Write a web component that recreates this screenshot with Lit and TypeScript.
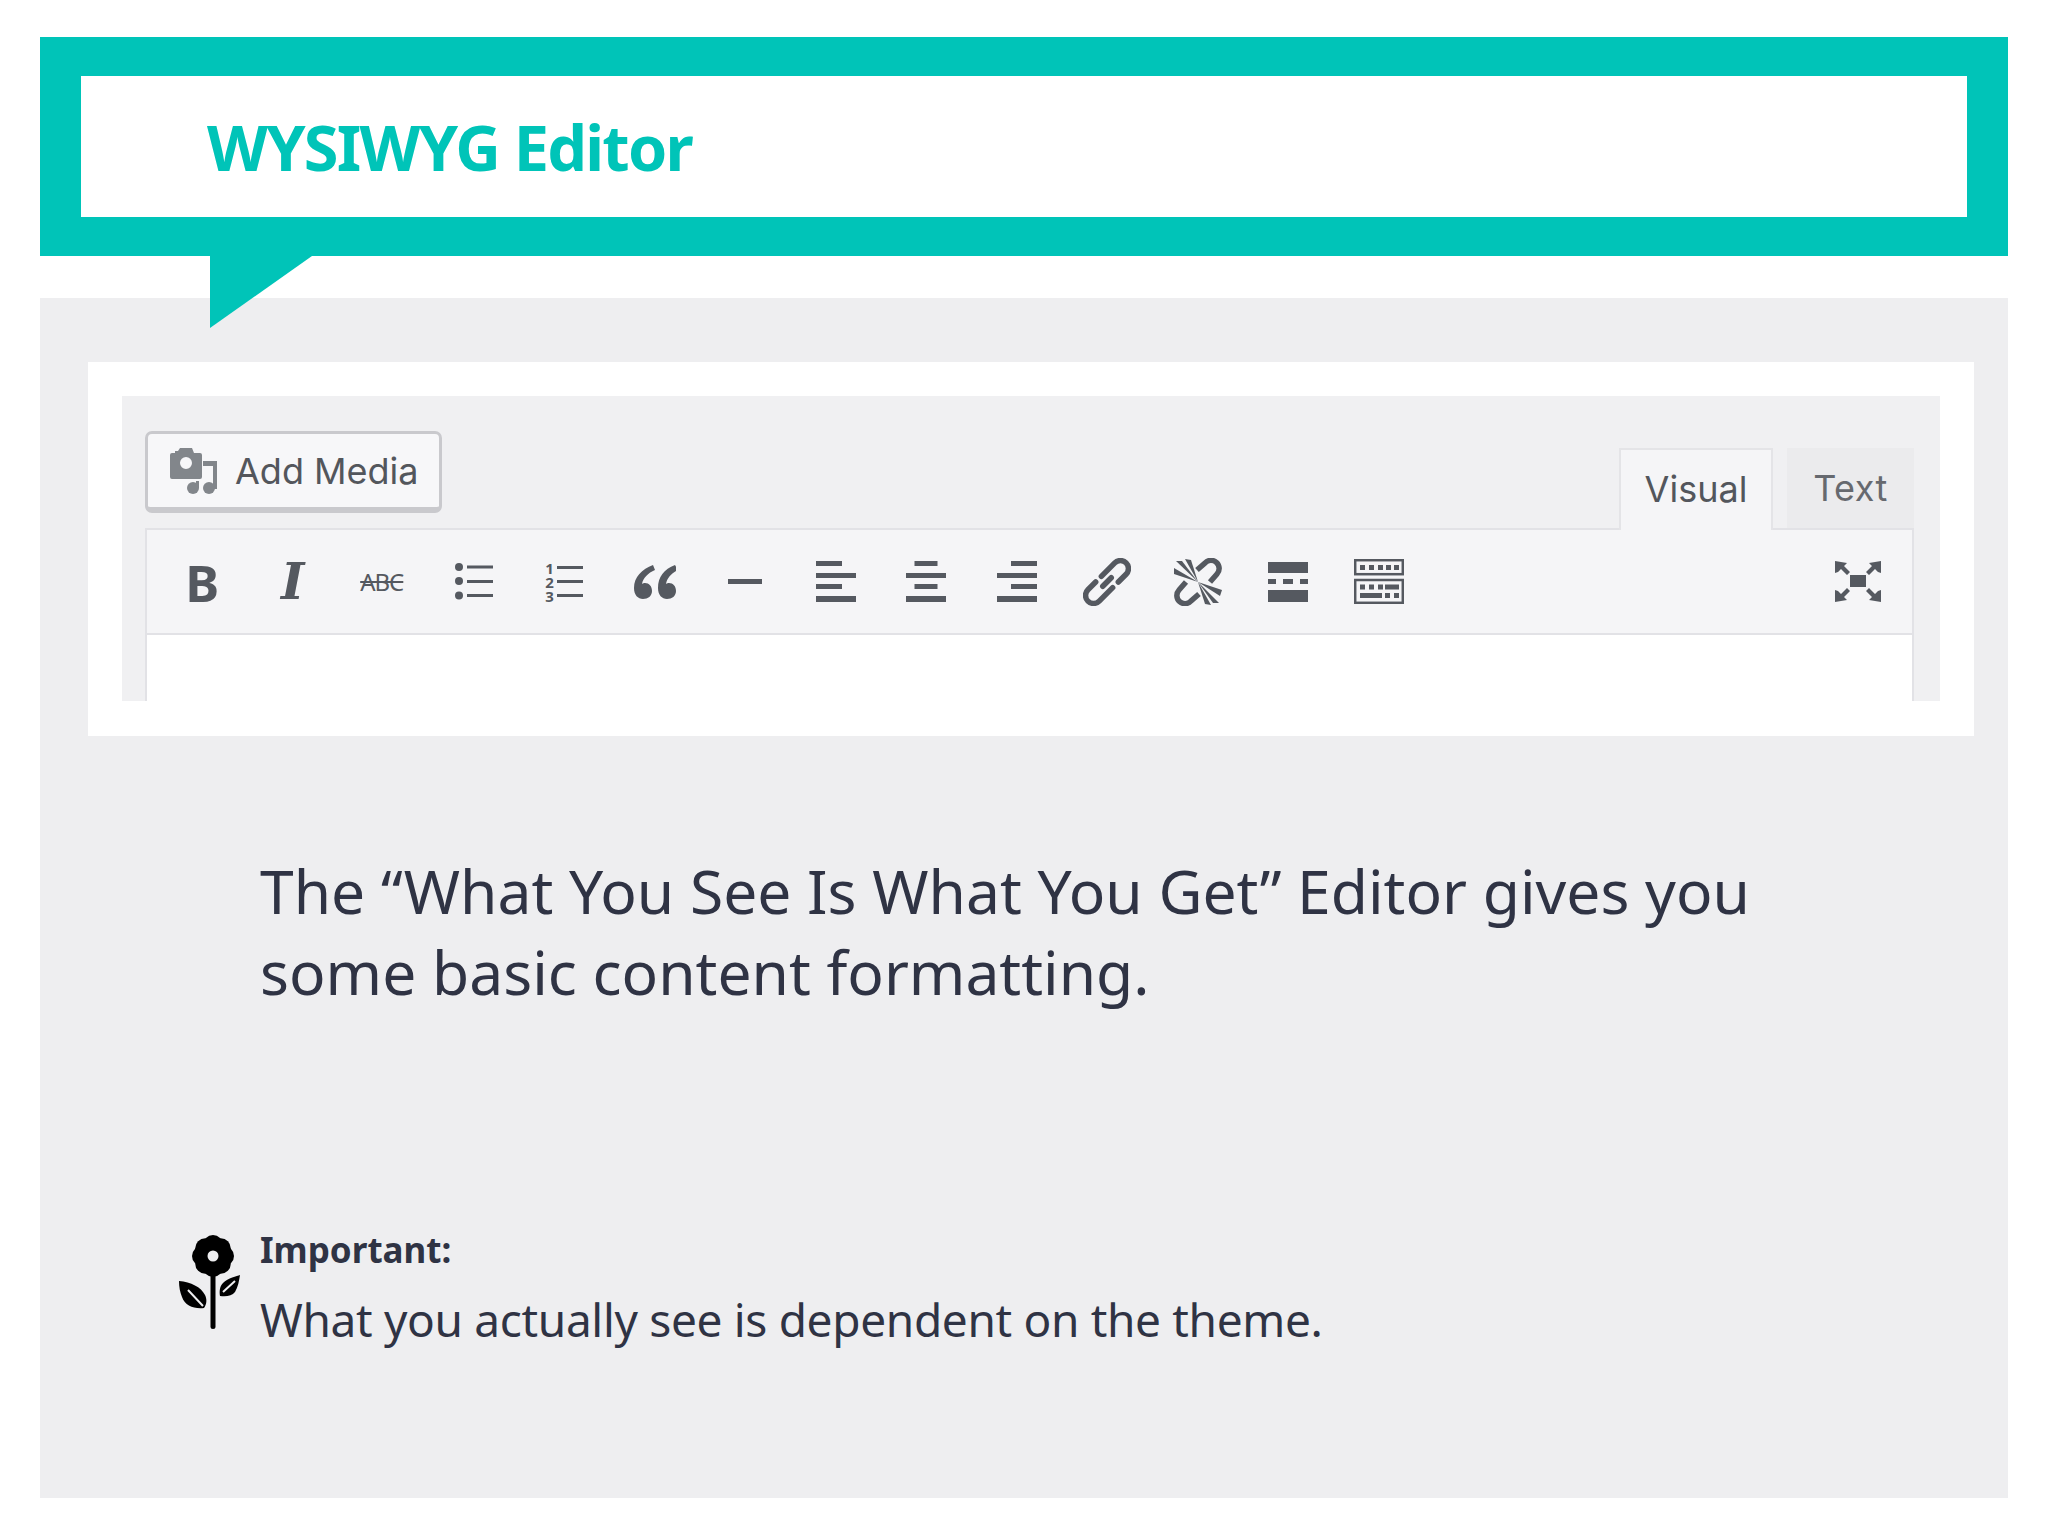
import { LitElement, html, css, svg } from 'lit';
import { customElement } from 'lit/decorators.js';

const ICON = '#555960';

// Toolbar glyphs, drawn at the size they have in the picture.
const icons = {
  bold: html`<span class="glyph bold">B</span>`,
  italic: html`<span class="glyph italic">I</span>`,
  strike: html`<span class="glyph strike">ABC</span>`,
  bullets: html`<svg width="38" height="37" viewBox="0 0 38 37" fill="${ICON}">
    <circle cx="4" cy="4" r="4"></circle><circle cx="4" cy="18" r="4"></circle><circle cx="4" cy="32.500" r="4"></circle>
    <rect x="12" y="2.500" width="26" height="3"></rect><rect x="12" y="17" width="26" height="3"></rect><rect x="12" y="31" width="26" height="3"></rect>
  </svg>`,
  numbers: html`<div class="numbers">
    ${['1', '2', '3'].map((n) => html`<span class="num">${n}</span><span class="num-bar"></span>`)}
  </div>`,
  quote: html`<svg width="42" height="34" viewBox="0 0 42 34" fill="${ICON}">
    <path d="M19 0C8 4 0 12 0 23c0 7 4 11 9 11s9-3 9-8-3-8-7-8c-1 0-2 0-3 1 1-6 6-11 13-14z"></path>
    <path d="M41 0C30 4 24 12 24 23c0 7 4 11 9 11s9-3 9-8-3-8-7-8c-1 0-2 0-3 1 1-6 6-11 12-14z"></path>
  </svg>`,
  hr: html`<svg width="34" height="5" viewBox="0 0 34 5" fill="${ICON}"><rect width="34" height="5"></rect></svg>`,
  alignLeft: html`<svg width="40" height="41" viewBox="0 0 40 41" fill="${ICON}">
    <rect width="26" height="5"></rect><rect y="12" width="40" height="5"></rect><rect y="23" width="26" height="5"></rect><rect y="35" width="40" height="6"></rect>
  </svg>`,
  alignCenter: html`<svg width="40" height="41" viewBox="0 0 40 41" fill="${ICON}">
    <rect x="8.500" width="23" height="5"></rect><rect y="12" width="40" height="5"></rect><rect x="8.500" y="23" width="23" height="5"></rect><rect y="35" width="40" height="6"></rect>
  </svg>`,
  alignRight: html`<svg width="40" height="41" viewBox="0 0 40 41" fill="${ICON}">
    <rect x="14" width="26" height="5"></rect><rect y="12" width="40" height="5"></rect><rect x="14" y="23" width="26" height="5"></rect><rect y="35" width="40" height="6"></rect>
  </svg>`,
  link: html`<svg width="48" height="48" viewBox="0 0 48 48">
    <g transform="rotate(-45 24 24)" fill="none" stroke="${ICON}" stroke-width="5.500" stroke-linecap="round">
      <path d="M24 16H43a8 8 0 0 1 0 16H32"></path>
      <path d="M24 32H5a8 8 0 0 1 0-16H16"></path>
      <path d="M18 24H30"></path>
    </g>
  </svg>`,
  unlink: html`<svg width="48" height="48" viewBox="0 0 48 48">
    <g fill="none" stroke="${ICON}" stroke-width="5.500">
      <path d="M23 12L31 5a8 8 0 0 1 12 11L36 24"></path>
      <path d="M25 36L17 43a8 8 0 0 1-12-11L12 24"></path>
    </g>
    <g fill="${ICON}">
      <polygon points="24,24 0,10 0,16"></polygon><polygon points="24,24 2,3 8,3"></polygon><polygon points="24,24 11,1 17,2"></polygon>
      <polygon points="24,24 48,32 46,38"></polygon><polygon points="24,24 45,45 39,45"></polygon><polygon points="24,24 37,47 31,46"></polygon>
    </g>
  </svg>`,
  more: html`<svg width="40" height="40" viewBox="0 0 40 40" fill="${ICON}">
    <rect width="40" height="11"></rect><rect y="17" width="8" height="5"></rect><rect x="15" y="17" width="10" height="5"></rect><rect x="32" y="17" width="8" height="5"></rect><rect y="28" width="40" height="12"></rect>
  </svg>`,
  sink: html`<svg width="50" height="45" viewBox="0 0 50 45">
    <g fill="none" stroke="${ICON}" stroke-width="2.500"><rect x="1.200" y="1.200" width="47.600" height="14"></rect><rect x="1.200" y="21" width="47.600" height="22.800"></rect></g>
    <g fill="${ICON}">
      ${[6, 15, 24, 32, 40].map((x) => svg`<rect x="${x}" y="6" width="5" height="5"></rect>`)}
      ${[6, 15, 24].map((x) => svg`<rect x="${x}" y="25.500" width="5" height="5"></rect>`)}
      <rect x="31" y="25.500" width="14" height="5"></rect>
      <rect x="6" y="34" width="22" height="5"></rect><rect x="31" y="34" width="5" height="5"></rect><rect x="40" y="34" width="5" height="5"></rect>
    </g>
  </svg>`,
  fullscreen: html`<svg width="46" height="41" viewBox="0 0 46 41" fill="${ICON}">
    <rect x="15" y="14" width="16" height="12"></rect>
    <polygon points="0,0 12,2 9,5 15,11 12,14 6,8 3,11 0,12"></polygon>
    <polygon points="46,0 34,2 37,5 31,11 34,14 40,8 43,11 46,12"></polygon>
    <polygon points="0,41 12,39 9,36 15,30 12,27 6,33 3,30 0,29"></polygon>
    <polygon points="46,41 34,39 37,36 31,30 34,27 40,33 43,30 46,29"></polygon>
  </svg>`,
};

const toolbar = [
  icons.bold, icons.italic, icons.strike, icons.bullets, icons.numbers, icons.quote, icons.hr,
  icons.alignLeft, icons.alignCenter, icons.alignRight, icons.link, icons.unlink, icons.more, icons.sink,
];

const petals = [0, 45, 90, 135, 180, 225, 270, 315];

@customElement('app-root')
export class AppRoot extends LitElement {
  static styles = css`
    :host {
      display: block;
      width: 2048px;
      height: 1536px;
      background: #fff;
      overflow: hidden;
      font-family: 'Noto Sans', 'Open Sans', sans-serif;
      font-variant-ligatures: none;
    }

    /* Speech bubble heading */
    .bubble {
      position: relative;
      margin: 37px 40px 0;
      padding: 39px 41px;
      background: #00c4b8;
    }
    .bubble-inner {
      height: 141px;
      padding-left: 126px;
      display: flex;
      align-items: center;
      background: #fff;
    }
    h1 {
      margin: 0;
      font-size: 63px;
      font-weight: 700;
      color: #00c4b8;
      letter-spacing: -1.75px;
    }
    .tail {
      position: absolute;
      left: 170px;
      top: 219px;
      z-index: 1;
      display: block;
    }

    /* Gray panel */
    .panel {
      height: 1200px;
      box-sizing: border-box;
      margin: 42px 40px 0;
      padding: 64px 34px 0 48px;
      background: #eeeef0;
      color: #2f3344;
    }
    .card {
      padding: 34px 34px 35px;
      background: #fff;
    }

    /* Editor screenshot */
    .editor {
      height: 305px;
      box-sizing: border-box;
      padding: 35px 26px 0 23px;
      overflow: hidden;
      background: #f0f0f2;
      font-family: 'Inter', 'Liberation Sans', sans-serif;
      color: #53565c;
    }
    .editor-top {
      display: flex;
      justify-content: space-between;
      align-items: flex-start;
      height: 97px;
    }
    .add-media {
      width: 297px;
      height: 82px;
      box-sizing: border-box;
      display: flex;
      align-items: center;
      gap: 18px;
      padding: 1px 0 0 22px;
      background: #f7f7f9;
      border: 3px solid #c9c9cd;
      border-bottom-width: 6px;
      border-radius: 7px;
      font-size: 36px;
    }
    .tabs {
      display: flex;
      gap: 14px;
      align-items: flex-end;
      margin-top: 17px;
      height: 82px;
    }
    .tab {
      display: flex;
      align-items: center;
      justify-content: center;
      box-sizing: border-box;
      height: 82px;
      font-size: 36px;
    }
    .tab.visual {
      width: 154px;
      padding-bottom: 3px;
      background: #f5f5f7;
      border: 2px solid #e4e4e7;
      border-bottom: none;
      position: relative;
      z-index: 1;
    }
    .tab.text {
      width: 127px;
      letter-spacing: 0.5px;
      background: #ebebed;
      color: #66696f;
      border-bottom: 2px solid #e4e4e7;
    }
    .box {
      position: relative;
      height: 173px;
      box-sizing: border-box;
      border: 2px solid #e2e2e6;
      border-bottom: none;
      background: #fff;
    }
    .toolbar {
      display: flex;
      align-items: center;
      height: 103px;
      padding: 0 9px 0 10px;
      background: #f5f5f7;
      border-bottom: 2px solid #e2e2e6;
    }
    .slot {
      width: 90.5px;
      flex: none;
      display: flex;
      align-items: center;
      justify-content: center;
    }
    .slot.end {
      margin-left: auto;
    }
    .glyph {
      color: #555960;
      line-height: 1;
    }
    .bold {
      font: 700 51px 'Noto Sans', sans-serif;
    }
    .italic {
      font: italic 700 50px 'DejaVu Serif', serif;
    }
    .strike {
      margin-left: -3px;
      font: 400 24px 'Noto Sans', sans-serif;
      text-decoration: line-through;
      letter-spacing: -1px;
    }
    .numbers {
      display: grid;
      grid-template-columns: 12px 26px;
      grid-auto-rows: 14px;
      align-items: center;
      color: #555960;
    }
    .num {
      font: 700 15px/14px 'Noto Sans', sans-serif;
    }
    .num-bar {
      height: 3px;
      background: #555960;
    }
    .dot {
      position: absolute;
      left: 114px;
      top: 171px;
      width: 2px;
      height: 2px;
      background: #333;
    }

    /* Copy */
    .intro {
      margin: 114px 200px 0 172px;
      font-size: 60.5px;
      line-height: 81px;
      font-weight: 400;
    }
    .note {
      position: relative;
      margin: 215px 0 0 172px;
    }
    .note strong {
      display: block;
      font-size: 35px;
      line-height: 46px;
      font-weight: 700;
    }
    .note p {
      margin: 16px 0 0;
      font-size: 46px;
      line-height: 60px;
      letter-spacing: -0.33px;
    }
    .flower {
      position: absolute;
      left: -81px;
      top: 5px;
      display: block;
    }
  `;

  render() {
    return html`
      <div class="bubble">
        <div class="bubble-inner"><h1>WYSIWYG Editor</h1></div>
        <svg class="tail" width="102" height="72" viewBox="0 0 102 72"><polygon points="0,0 102,0 0,72" fill="#00c4b8"></polygon></svg>
      </div>
      <div class="panel">
        <div class="card">
          <div class="editor">
            <div class="editor-top">
              <div class="add-media">
                <svg width="47" height="46" viewBox="0 0 47 46" fill="#82868b">
                  <path fill-rule="evenodd" d="M2 5h3V3h3l2-3h12l2 5h6a2 2 0 0 1 2 2v22a2 2 0 0 1-2 2H2a2 2 0 0 1-2-2V7a2 2 0 0 1 2-2zM16 9a6 6 0 1 0 0 12 6 6 0 0 0 0-12z"></path>
                  <path d="M33 13h14v28h-4V18h-10z"></path>
                  <circle cx="39" cy="40" r="6"></circle><circle cx="23" cy="40" r="6"></circle>
                  <path d="M26 33h3v7h-3z"></path>
                </svg>
                Add Media
              </div>
              <div class="tabs">
                <div class="tab visual">Visual</div>
                <div class="tab text">Text</div>
              </div>
            </div>
            <div class="box">
              <div class="toolbar">
                ${toolbar.map((icon) => html`<div class="slot">${icon}</div>`)}
                <div class="slot end">${icons.fullscreen}</div>
              </div>
              <div class="dot"></div>
            </div>
          </div>
        </div>
        <div class="intro">The “What You See Is What You Get” Editor gives you some basic content formatting.</div>
        <div class="note">
          <svg class="flower" width="62" height="98" viewBox="0 0 62 98">
            <g>
              ${petals.map((a) => svg`<circle cx="34" cy="13" r="10" transform="rotate(${a} 34 24)"></circle>`)}
              <circle cx="34" cy="24" r="18"></circle>
              <rect x="31.500" y="40" width="5" height="57" rx="2.500"></rect>
              <path d="M0 49c12 1 22 6 26 14 2 4 2 9-1 13-10 1-19-2-22-11-2-5-3-10-3-16z"></path>
              <path d="M61 43c-3 1-12 3-17 8-3 3-4 8-3 13 6 1 12 0 15-4 3-5 4-11 5-17z"></path>
            </g>
            <circle cx="34" cy="24" r="5.500" fill="#eeeef0"></circle>
            <path d="M9 58L24 74M56 49L44 60" stroke="#eeeef0" stroke-width="2" fill="none"></path>
          </svg>
          <strong>Important:</strong>
          <p>What you actually see is dependent on the theme.</p>
        </div>
      </div>
    `;
  }
}
